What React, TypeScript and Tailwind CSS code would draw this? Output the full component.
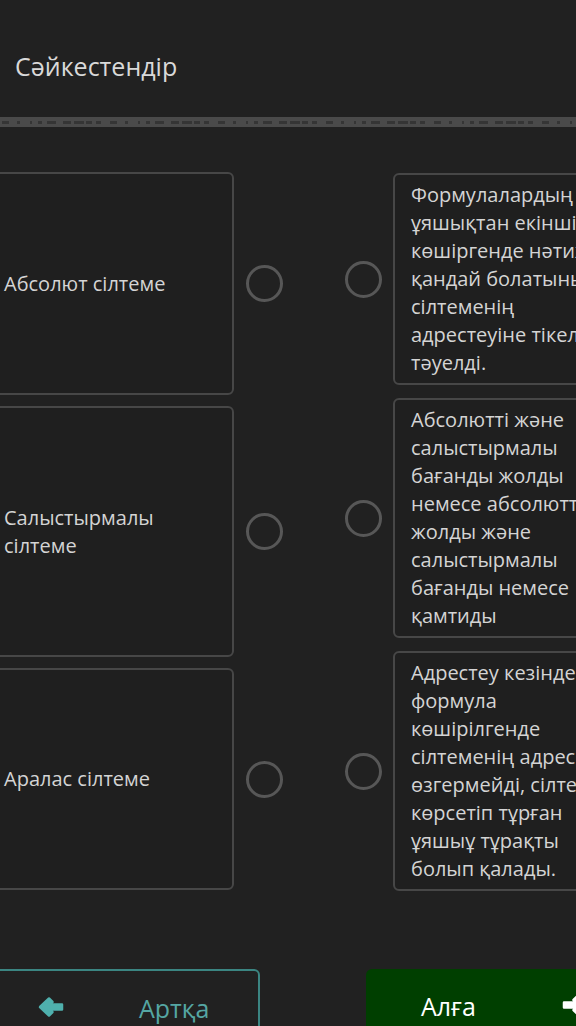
const leftItems = [
  { text: "Абсолют сілтеме", h: "h-[223px]" },
  { text: "Салыстырмалы сілтеме", h: "h-[251px]" },
  { text: "Аралас сілтеме", h: "h-[222px]" },
];

const rightItems = [
  "Формулалардың ұяшықтан екіншісіне көшіргенде нәтижесі қандай болатыны сілтеменің адрестеуіне тікелей тәуелді.",
  "Абсолютті және салыстырмалы бағанды жолды немесе абсолютті жолды және салыстырмалы бағанды немесе қамтиды",
  "Адрестеу кезінде формула көшірілгенде сілтеменің адресі өзгермейді, сілтеме көрсетіп тұрған ұяшыұ тұрақты болып қалады.",
];

// little dash marks along the divider bar
const dashes: [number, number][] = [];
{
  let x = 2;
  let seed = 7;
  while (x < 576) {
    seed = (seed * 9301 + 49297) % 233280;
    const w = 2 + (seed % 9);
    dashes.push([x, w]);
    seed = (seed * 9301 + 49297) % 233280;
    x += w + 2 + (seed % 9);
  }
}

const Radio = () => (
  <div className="w-[37px] h-[37px] rounded-full border-[3px] border-[#575757]" />
);

// chunky arrow like the font-awesome one
const Arrow = ({ flip, color }: { flip?: boolean; color: string }) => (
  <svg
    width="26"
    height="22"
    viewBox="0 0 26 22"
    className={flip ? "-scale-x-100" : ""}
  >
    <path
      d="M2 11 L11 2.5 L14.5 6 L10.5 8.5 H24 V13.5 H10.5 L14.5 16 L11 19.5 Z"
      fill={color}
      stroke={color}
      strokeWidth="2.5"
      strokeLinejoin="round"
    />
  </svg>
);

export default function App() {
  return (
    <div className="min-h-screen bg-[#212121] overflow-hidden font-['Open_Sans',sans-serif] text-[#d4d4d4]">
      <div className="pt-[50px] px-[15px]">
        <h1 className="text-[25px] leading-[32px] text-[#d9d9d9]">Сәйкестендір</h1>
      </div>

      <div className="mt-[35px] h-[10px] bg-[#4a4a4a]">
        <svg width="576" height="10" className="block">
          {dashes.map(([x, w], i) => (
            <rect key={i} x={x} y={4} width={w} height={3} fill="#353535" />
          ))}
        </svg>
      </div>

      <div className="mt-[45px] flex ml-[-12px] gap-[39px]">
        <div className="flex flex-col gap-[11px] shrink-0">
          {leftItems.map((item) => (
            <div key={item.text} className="flex">
              <div
                className={`w-[246px] ${item.h} flex items-center pl-[14px] pr-[12px] border-2 border-[#474747] rounded-md bg-[#1f1f1f] text-[20px] leading-[28px]`}
              >
                {item.text}
              </div>
              <div className="w-[60px] flex items-center justify-center">
                <Radio />
              </div>
            </div>
          ))}
        </div>

        <div className="flex flex-col gap-[13px] shrink-0 mt-[1px]">
          {rightItems.map((t) => (
            <div key={t} className="flex">
              <div className="w-[60px] flex items-center justify-center">
                <Radio />
              </div>
              <div className="w-[246px] px-[16px] py-[6px] border-2 border-[#474747] rounded-md bg-[#1f1f1f] text-[20px] leading-[28px]">
                {t}
              </div>
            </div>
          ))}
        </div>
      </div>

      <div className="mt-[78px] flex ml-[-12px] gap-[106px]">
        <button className="w-[272px] h-[80px] shrink-0 border-2 border-[#3b8582] rounded-md flex items-start pt-[20px] pl-[48px] text-[#55a6a3]">
          <span className="mt-[5px]">
            <Arrow color="#4fb0ad" />
          </span>
          <span className="ml-[75px] text-[25px] leading-[34px]">Артқа</span>
        </button>
        <button className="w-[260px] h-[80px] shrink-0 bg-[#003f00] rounded-md flex items-start pt-[20px] pl-[55px] text-white">
          <span className="text-[25px] leading-[34px]">Алға</span>
          <span className="mt-[5px] ml-[86px]">
            <Arrow flip color="#ffffff" />
          </span>
        </button>
      </div>
    </div>
  );
}
